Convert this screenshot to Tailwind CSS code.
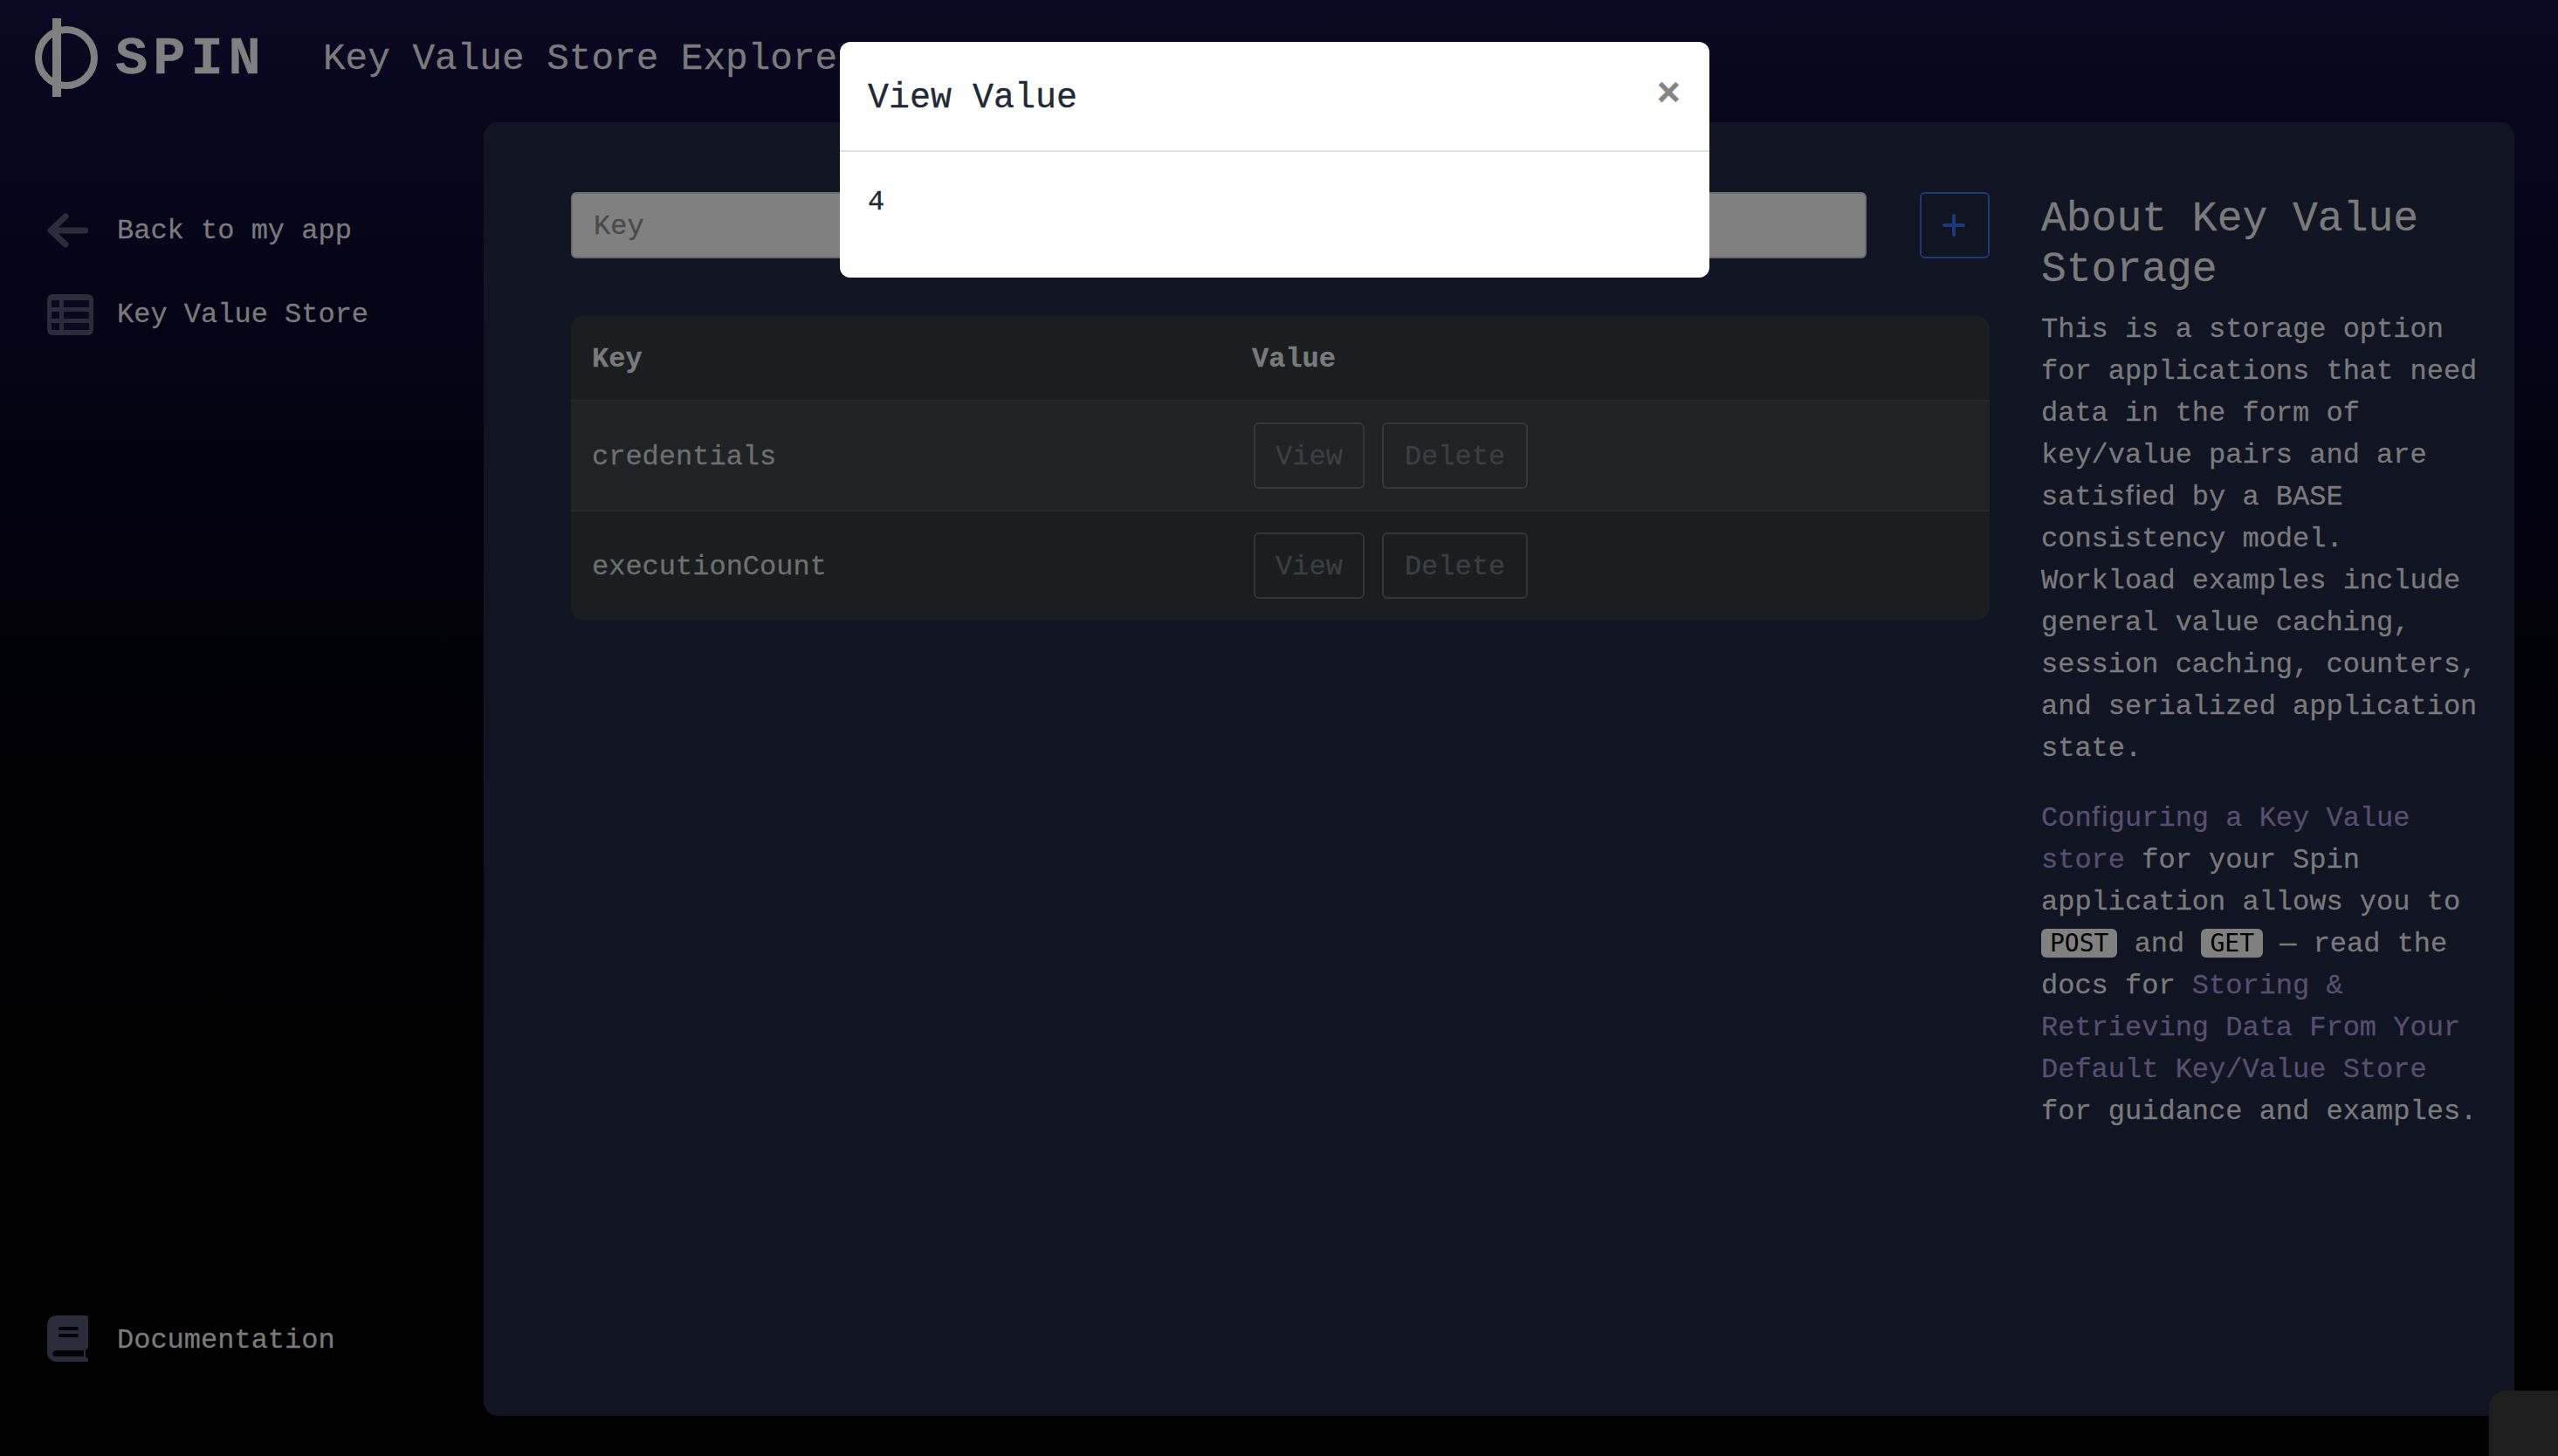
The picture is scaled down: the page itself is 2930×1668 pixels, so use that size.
<!DOCTYPE html>
<html lang="en">

<head>
  <meta charset="UTF-8">
  <title>Key Value Store Explorer</title>
  <script src="https://cdn.jsdelivr.net/npm/@tailwindcss/browser@4"></script>
</head>

<body>
  <div class="relative w-[2930px] h-[1668px] overflow-hidden bg-linear-to-b from-[#0b0823] to-black font-['Liberation_Mono',monospace] text-[32px] leading-[48px] text-[#7a7a7a] [-webkit-text-stroke:0.3px]">

    <!-- top bar -->
    <header class="flex items-center h-[132px] mb-[8px] pl-[40px]">
      <svg class="w-[74px] h-[90px] shrink-0" viewBox="0 0 74 90">
        <circle cx="36" cy="45" r="32" fill="none" stroke="#808080" stroke-width="8" />
        <rect x="20" y="0" width="10" height="90" fill="#808080" />
      </svg>
      <span class="ml-[18px] w-[238px] pt-[4px] text-[62px] font-bold tracking-[6px] text-[#808080]">SPIN</span>
      <h1 class="pt-[4px] text-[42.7px] leading-[56px] text-[#7a7a7a]">Key Value Store Explorer</h1>
    </header>

    <div class="flex h-[1482px]">
      <!-- sidebar -->
      <nav class="w-[554px] shrink-0 flex flex-col pl-[54px] pt-[100px] pb-[62px]">
        <a class="flex items-center h-[48px] gap-[33px]" href="#">
          <svg class="w-[47px] h-[40px] shrink-0" viewBox="0 0 47 40" fill="none" stroke="#2a2c3c" stroke-width="7" stroke-linecap="round" stroke-linejoin="round">
            <path d="M21 4 4 20 21 36M4 20H44" />
          </svg>
          <span class="pt-[2px]">Back to my app</span>
        </a>
        <a class="flex items-center h-[48px] mt-[48px] gap-[27px]" href="#">
          <svg class="w-[53px] h-[47px] shrink-0" viewBox="0 0 53 47">
            <rect width="53" height="47" rx="6" fill="#2a2c3c" />
            <g fill="#0a0820">
              <rect x="5" y="7" width="9" height="8" />
              <rect x="19" y="7" width="29" height="8" />
              <rect x="5" y="20" width="9" height="8" />
              <rect x="19" y="20" width="29" height="8" />
              <rect x="5" y="33" width="9" height="8" />
              <rect x="19" y="33" width="29" height="8" />
            </g>
          </svg>
          <span class="pt-[2px]">Key Value Store</span>
        </a>
        <a class="flex items-center h-[53px] mt-auto gap-[33px]" href="#">
          <svg class="w-[47px] h-[53px] shrink-0" viewBox="0 0 47 53">
            <path fill="#2a2c3c" d="M10 0H45a2 2 0 0 1 2 2V37l-3 3V47l2 2a2 2 0 0 1-1 4H10A10 10 0 0 1 0 43V10A10 10 0 0 1 10 0Z" />
            <rect x="13" y="13" width="23" height="4" rx="2" fill="#020208" />
            <rect x="13" y="21" width="23" height="4" rx="2" fill="#020208" />
            <path fill="#020208" d="M10 40H42V47H10a3.500 3.500 0 0 1 0-7Z" />
          </svg>
          <span class="pt-[4px]">Documentation</span>
        </a>
      </nav>

      <!-- main panel -->
      <main class="flex w-[2326px] rounded-[16px] bg-[#101423] pl-[100px] pt-[80px]">
        <section class="w-[1625px] shrink-0">
          <div class="flex items-start justify-between">
            <input class="w-[1484px] h-[76px] px-[24px] pt-[2px] rounded-[6px] border-2 border-[#6b6b6b] bg-[#808080] placeholder:text-[#4a4a4a]" placeholder="Key" />
            <button class="w-[80px] h-[76px] pr-[2px] flex items-center justify-center rounded-[6px] border-2 border-[#1c3a7a]">
              <svg class="w-[26px] h-[26px]" viewBox="0 0 26 26" fill="none" stroke="#1c3a7a" stroke-width="4" stroke-linecap="round">
                <path d="M13 2V24M2 13H24" />
              </svg>
            </button>
          </div>

          <div class="mt-[66px] rounded-[14px] overflow-hidden bg-[#1a1e20]">
            <table class="w-full table-fixed">
              <thead>
                <tr class="h-[97px] border-b-2 border-[#25292b]">
                  <th class="w-[756px] pl-[24px] pt-[4px] text-left font-bold">Key</th>
                  <th class="pl-[24px] pt-[4px] text-left font-bold">Value</th>
                </tr>
              </thead>
              <tbody class="text-[#6f6f6f]">
                <tr class="h-[126px] border-b-2 border-[#25292b] bg-[#1f2325]">
                  <td class="pl-[24px] pt-[4px]">credentials</td>
                  <td class="pl-[26px]">
                    <div class="flex gap-[20px]">
                      <button class="w-[127px] h-[76px] pt-[3px] rounded-[6px] border-2 border-[#33373a] text-[#3c3f42]">View</button>
                      <button class="w-[167px] h-[76px] pt-[3px] rounded-[6px] border-2 border-[#33373a] text-[#3c3f42]">Delete</button>
                    </div>
                  </td>
                </tr>
                <tr class="h-[125px]">
                  <td class="pl-[24px] pt-[4px]">executionCount</td>
                  <td class="pl-[26px]">
                    <div class="flex gap-[20px]">
                      <button class="w-[127px] h-[76px] pt-[3px] rounded-[6px] border-2 border-[#33373a] text-[#3c3f42]">View</button>
                      <button class="w-[167px] h-[76px] pt-[3px] rounded-[6px] border-2 border-[#33373a] text-[#3c3f42]">Delete</button>
                    </div>
                  </td>
                </tr>
              </tbody>
            </table>
          </div>
        </section>

        <aside class="ml-[59px] w-[510px] shrink-0 pt-[2px]">
          <h2 class="text-[48px] leading-[58px]">About Key Value Storage</h2>
          <p class="mt-[16px]">This is a storage option for applications that need data in the form of key/value pairs and are satisﬁed by a BASE consistency model. Workload examples include general value caching, session caching, counters, and serialized application state.</p>
          <p class="mt-[32px]">
            <a class="text-[#574e70]" href="#">Conﬁguring a Key Value store</a> for your Spin application allows you to
            <code class="inline-block h-[33px] px-[10px] rounded-[6px] bg-[#808080] text-black text-[28px] leading-[33px] font-['DejaVu_Sans_Mono',monospace] [-webkit-text-stroke:0px]">POST</code> and
            <code class="inline-block h-[33px] px-[10px] rounded-[6px] bg-[#808080] text-black text-[28px] leading-[33px] font-['DejaVu_Sans_Mono',monospace] [-webkit-text-stroke:0px]">GET</code> — read the docs for
            <a class="text-[#574e70]" href="#">Storing &amp; Retrieving Data From Your Default Key/Value Store</a> for guidance and examples.
          </p>
        </aside>
      </main>
    </div>

    <!-- corner widget -->
    <div class="absolute right-0 bottom-0 w-[79px] h-[75px] rounded-tl-[20px] bg-[#1e1e1e]"></div>

    <!-- modal -->
    <div class="absolute left-[962px] top-[48px] w-[996px] h-[270px] rounded-[12px] bg-white text-[#1f2937]">
      <div class="flex items-center justify-between h-[126px] pl-[32px] pr-[33px] border-b-2 border-[#dfe3e8]">
        <h3 class="pt-[6px] text-[40px] leading-[50px]">View Value</h3>
        <span class="-mt-[2px] text-[46px] font-bold text-[#858585]">×</span>
      </div>
      <div class="pl-[32px] pt-[34px]">4</div>
    </div>
  </div>
</body>

</html>
